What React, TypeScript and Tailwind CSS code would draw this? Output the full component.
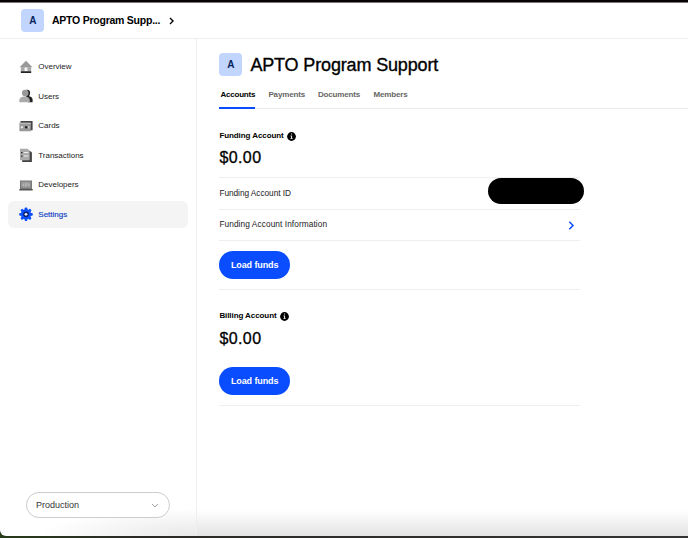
import React from "react";

type IconProps = { children: React.ReactNode };

function Glyph({ children }: IconProps) {
  return (
    <svg viewBox="0 0 14 14" className="h-3.5 w-3.5 shrink-0 overflow-visible">
      {children}
    </svg>
  );
}

const HomeIcon = () => (
  <Glyph>
    <path d="M1.8 6h10.4v5.4H1.8z" fill="#aaa" />
    <path d="M7 .8 13.2 6.9H.8z" fill="#999" />
    <path d="M5.6 7.4h2.8v4H5.6z" fill="#f5f5f5" />
    <path d="M1.8 11.2h10.4v1.7H1.8z" fill="#222" />
  </Glyph>
);

const UsersIcon = () => (
  <Glyph>
    <path d="M7 .9c2.7-.8 4.4.8 4.1 3.3-.2 1.7-.8 2.2-1 3.1 2.5.4 3.5 1.6 3.5 3.5v2.4H9L7 7z" fill="#222" />
    <circle cx="6.2" cy="4.1" r="3.3" fill="#999" />
    <path d="M.3 13.2v-1.7C.3 8.8 2.5 7.6 5.6 7.6s5.2 1.2 5.2 3.9v1.7z" fill="#aaa" />
  </Glyph>
);

const CardsIcon = () => (
  <Glyph>
    <path d="M1.5 2h12.1v9.3H1.5z" fill="#444" />
    <path d="M.4 3.7h11.4v8.6H.4z" fill="#999" />
    <path d="M.4 3.7h11.4v1.2H.4z" fill="#bbb" />
    <path d="M1.8 7.2h2.3v2H1.8z" fill="#e5e5e5" />
    <circle cx="7.2" cy="8.3" r="1.2" fill="#222" />
    <path d="M9.3 7.3h1.1v2H9.3z" fill="#ddd" />
  </Glyph>
);

const TransactionsIcon = () => (
  <Glyph>
    <path d="M3.2 2.8h7.6l2.1 1.6V14H3.2z" fill="#444" />
    <path d="M1 .7h7.5l2.2 2.2v9.3H1z" fill="#aaa" />
    <path d="M2.1 4h1.4v1.3H2.1zM2.1 7.4h1.4v1.3H2.1z" fill="#222" />
    <path d="M4.7 4h4.6v1.1H4.7zM4.7 7.5h4.6v1.1H4.7z" fill="#eee" />
  </Glyph>
);

const DevelopersIcon = () => (
  <Glyph>
    <path d="M1 2.5h12v8.7H1z" fill="#777" />
    <path d="M2.2 3.6h9.6v6.2H2.2z" fill="#999" />
    <path d="m5.2 5.4-1.2 1.3 1.2 1.3M8.8 5.4 10 6.7 8.8 8M7.4 5.3l-.8 3" fill="none" stroke="#ddd" strokeWidth=".7" />
    <path d="M.3 11h13.4v1.4H.3z" fill="#555" />
  </Glyph>
);

const SettingsIcon = () => (
  <Glyph>
    <g fill="#0a4dff">
      <circle cx="7" cy="7.3" r="5.1" />
      {[0, 45, 90, 135].map((angle) => (
        <rect key={angle} x="5.6" y=".5" width="2.8" height="13.6" rx="1" transform={`rotate(${angle} 7 7.3)`} />
      ))}
    </g>
    <circle cx="7" cy="7.3" r="2.8" fill="#07206b" />
    <circle cx="7" cy="7.3" r="1.4" fill="#e8edff" />
  </Glyph>
);

const InfoIcon = () => (
  <svg viewBox="0 0 9 9" className="block h-[9px] w-[9px] shrink-0">
    <circle cx="4.5" cy="4.5" r="4.4" fill="#000" />
    <path d="M4 1.6h1.1v1H4zM3.5 3.6h1.6v2.6h.6V7H3.4v-.8H4V4.4h-.5z" fill="#ddd" />
  </svg>
);

const navItems = [
  { label: "Overview", Icon: HomeIcon },
  { label: "Users", Icon: UsersIcon },
  { label: "Cards", Icon: CardsIcon },
  { label: "Transactions", Icon: TransactionsIcon },
  { label: "Developers", Icon: DevelopersIcon },
];

function LoadButton() {
  return (
    <button className="flex h-7 w-[70.5px] items-center justify-center rounded-full bg-[#0a4dff] pt-px text-[9px] font-bold tracking-[-0.12px] text-white">
      Load funds
    </button>
  );
}

export default function App() {
  return (
    <div className="h-[538px] w-full overflow-hidden bg-gradient-to-r from-[#273c19] via-[#2b2926] via-20% to-[#333] font-['Liberation_Sans',Arial,sans-serif] text-black">
      <div className="h-0.5 bg-[#080406]" />
      <div className="flex h-[534px] flex-col overflow-hidden rounded-bl-md border-t border-[#777] bg-white">
        <header className="flex h-9 shrink-0 items-center border-b border-[#eee] pl-[21.4px]">
          <div className="flex h-[23px] w-[23px] items-center justify-center rounded-[4px] bg-[#c2d5ff] text-[10px] font-bold text-[#06245f]">
            A
          </div>
          <span className="ml-[7.6px] w-[109px] whitespace-nowrap pt-px text-[10.5px] font-bold tracking-[-0.24px]">APTO Program Supp...</span>
          <svg viewBox="0 0 5 8" className="ml-2 h-2 w-[5px]">
            <path d="m1 1 3 3-3 3" fill="none" stroke="#000" strokeWidth="1.4" />
          </svg>
        </header>

        <div className="flex min-h-0 flex-1">
          <aside className="flex w-[197px] shrink-0 flex-col border-r border-[#eee] bg-[radial-gradient(ellipse_at_bottom_right,#e8e8e8,transparent_70%)] bg-[length:160px_28px] bg-right-bottom bg-no-repeat">
            <nav className="flex flex-col gap-[2.6px] pl-2 pt-[14px]">
              {navItems.map(({ label, Icon }) => (
                <div key={label} className="flex h-[27px] items-center gap-[5.3px] pl-[11px] text-[8px] tracking-[-0.02px] text-[#222]">
                  <Icon />
                  <span className="pt-px">{label}</span>
                </div>
              ))}
              <div className="flex h-[27px] w-[180px] items-center gap-[5.3px] rounded-md bg-[#f4f4f4] pl-[11px] text-[8px] text-[#1749c4] [-webkit-text-stroke:0.2px]">
                <SettingsIcon />
                <span className="pt-px">Settings</span>
              </div>
            </nav>
            <div className="mb-[18px] ml-[26px] mt-auto flex h-[26px] w-[143.5px] items-center justify-between rounded-full border border-[#ccc] bg-white pl-[9px] pr-[10px] text-[9px] text-[#333]">
              <span className="pt-px">Production</span>
              <svg viewBox="0 0 8 5" className="h-[5px] w-2">
                <path d="m1 1 3 3 3-3" fill="none" stroke="#999" strokeWidth=".9" />
              </svg>
            </div>
          </aside>

          <main className="flex min-w-0 flex-1 flex-col bg-gradient-to-t from-[#e3e3e3] to-white to-[26px] pl-[22.4px]">
            <div className="flex h-[50px] items-center gap-2">
              <div className="flex h-[23px] w-[23px] items-center justify-center rounded-[4px] bg-[#c2d5ff] text-[10px] font-bold text-[#06245f]">
                A
              </div>
              <h1 className="whitespace-nowrap pt-px text-[18px] leading-6 tracking-[-0.15px] [-webkit-text-stroke:0.35px]">APTO Program Support</h1>
            </div>
            <div className="flex h-5 border-b border-[#eaeaea] text-[8px] font-bold leading-3 tracking-[-0.2px] text-[#666]">
              <div className="-mb-px h-5 w-[35.5px] whitespace-nowrap border-b-2 border-[#0a4dff] pl-px text-black">Accounts</div>
              <span className="ml-[13.5px] w-[49.5px] tracking-[-0.15px]">Payments</span>
              <span className="w-[55.5px] tracking-[-0.15px]">Documents</span>
              <span className="tracking-[-0.15px]">Members</span>
            </div>

            <div className="w-[361px]">
              <section className="border-b border-[#eee]">
                <div className="flex h-[33px] items-end gap-[3px] text-[8px] font-bold leading-3 tracking-[-0.08px]">
                  <span>Funding Account</span>
                  <span className="pb-[1.5px]"><InfoIcon /></span>
                </div>
                <p className="flex h-9 items-center border-b border-[#eee] pb-[3px] text-base tracking-[0.4px] [-webkit-text-stroke:0.3px]">$0.00</p>
                <div className="flex h-8 items-center justify-between border-b border-[#eee] text-[8.3px] tracking-[-0.05px] text-[#222]">
                  <span>Funding Account ID</span>
                  <div className="-mr-1 -mt-[5px] h-[26px] w-24 shrink-0 rounded-full bg-black" />
                </div>
                <div className="flex h-[31px] items-center justify-between border-b border-[#eee] pr-[5px] text-[8.3px] tracking-[0.08px] text-[#222]">
                  <span className="pb-px">Funding Account Information</span>
                  <svg viewBox="0 0 7 9" className="h-[9px] w-[7px]">
                    <path d="m1.3.8 3.7 3.7-3.7 3.7" fill="none" stroke="#0a4dff" strokeWidth="1.5" />
                  </svg>
                </div>
                <div className="flex h-12 items-center">
                  <LoadButton />
                </div>
              </section>
              <section className="border-b border-[#eee] pb-[10px]">
                <div className="flex h-8 items-end gap-[3px] text-[8px] font-bold leading-3 tracking-[-0.08px]">
                  <span>Billing Account</span>
                  <span className="pb-[1.5px]"><InfoIcon /></span>
                </div>
                <p className="flex h-[33px] items-center text-base tracking-[0.4px] [-webkit-text-stroke:0.3px]">$0.00</p>
                <div className="pt-3">
                  <LoadButton />
                </div>
              </section>
            </div>
          </main>
        </div>
      </div>
    </div>
  );
}
